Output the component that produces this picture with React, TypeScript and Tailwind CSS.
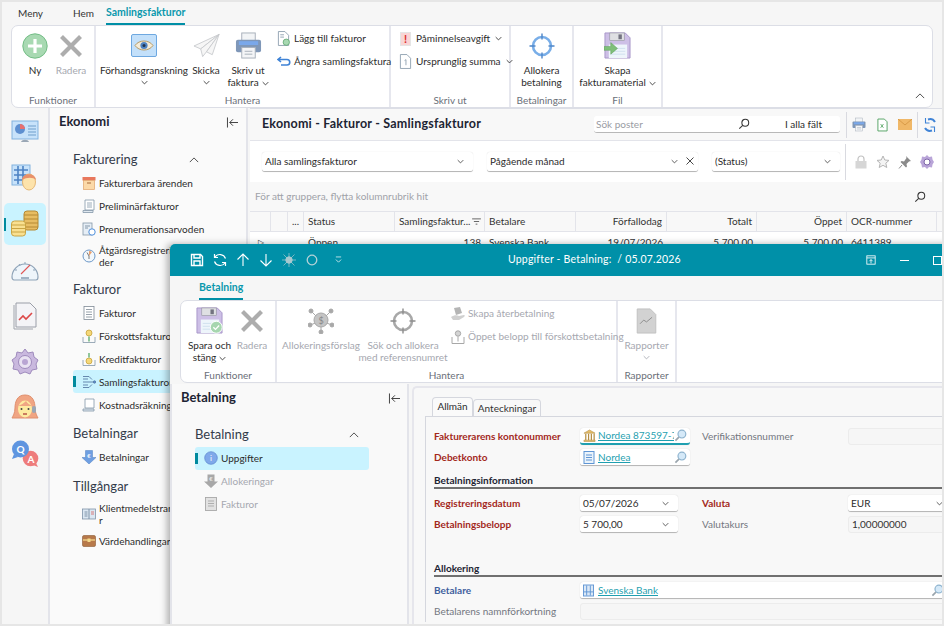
import React from 'react';

type IconProps = { className?: string };

const Chev = ({ className = '' }: IconProps) => (
  <svg viewBox="0 0 10 6" className={`inline-block w-[7px] h-[5px] ${className}`} fill="none" stroke="currentColor" strokeWidth="1.2">
    <path d="M1 1l4 4 4-4" />
  </svg>
);

const ChevUp = ({ className = '' }: IconProps) => (
  <svg viewBox="0 0 12 7" className={`w-[10px] h-[6px] ${className}`} fill="none" stroke="#444" strokeWidth="1.1">
    <path d="M1 6l5-5 5 5" />
  </svg>
);

const Search = ({ color = '#333' }: { color?: string }) => (
  <svg viewBox="0 0 14 14" className="w-[12px] h-[12px] shrink-0" fill="none" stroke={color} strokeWidth="1.2">
    <circle cx="8.5" cy="5.5" r="4" />
    <path d="M5.5 8.5L1.5 12.5" />
  </svg>
);

const BlueLens = () => (
  <svg viewBox="0 0 14 14" className="w-[13px] h-[13px] shrink-0" fill="#d5e9f8" stroke="#8fb4cf" strokeWidth="1.3">
    <circle cx="8.5" cy="5.5" r="4.2" />
    <path d="M5.3 8.7L1.5 12.5" stroke="#9aa5ad" strokeWidth="1.8" />
  </svg>
);

const Collapse = () => (
  <svg viewBox="0 0 14 12" className="w-[13px] h-[11px]" fill="none" stroke="#333" strokeWidth="1">
    <path d="M1.5 0.5v11M13 6H4M7.5 2.5L4 6l3.5 3.5" />
  </svg>
);

const PlusCircle = () => (
  <svg viewBox="0 0 26 26" className="w-[26px] h-[26px]">
    <circle cx="13" cy="13" r="12.2" fill="#a8d9b2" stroke="#74bd86" />
    <path d="M13 6v14M6 13h14" stroke="#fff" strokeWidth="3.2" />
  </svg>
);

const BigX = () => (
  <svg viewBox="0 0 24 24" className="w-[24px] h-[24px]">
    <path d="M2.5 2.5l19 19M21.5 2.5l-19 19" stroke="#adadad" strokeWidth="4.2" />
  </svg>
);

const EyeBox = () => (
  <svg viewBox="0 0 26 24" className="w-[26px] h-[24px]">
    <rect x="0.5" y="0.5" width="25" height="22" rx="1.5" fill="#c3e0fa" stroke="#6ea8e0" />
    <path d="M4 11.5c4-6 14-6 18 0-4 6-14 6-18 0z" fill="#f5ecd8" stroke="#b59a66" />
    <circle cx="13" cy="11.5" r="3.6" fill="#4e83c2" />
    <circle cx="13" cy="11.5" r="1.5" fill="#20344f" />
  </svg>
);

const Plane = () => (
  <svg viewBox="0 0 28 26" className="w-[27px] h-[26px]" fill="#f6f6f6" stroke="#c6c9cc" strokeWidth="0.9">
    <path d="M27 1L1 13l7 3z" />
    <path d="M27 1L8 16l2 8 4-5z" />
    <path d="M27 1L14 19l6 3z" />
  </svg>
);

const Printer = ({ size = 'w-[27px] h-[27px]' }: { size?: string }) => (
  <svg viewBox="0 0 28 28" className={size}>
    <rect x="7" y="1" width="14" height="9" fill="#f2f4f6" stroke="#a8b0ba" />
    <rect x="1" y="8" width="26" height="13" rx="2" fill="#7f97b8" />
    <rect x="4" y="9.5" width="20" height="4" fill="#7aa8ea" />
    <rect x="7" y="16" width="14" height="11" fill="#f4f5f7" stroke="#a8b0ba" />
    <path d="M10 20h8M10 23h8" stroke="#a8b0ba" />
  </svg>
);

const Target = ({ gray = false }: { gray?: boolean }) => {
  const c = gray ? '#a8a8a8' : '#79aee8';
  const d = gray ? '#8d8d8d' : '#4f86c8';
  return (
    <svg viewBox="0 0 26 26" className="w-[26px] h-[26px]" fill="none">
      <circle cx="13" cy="13" r="9" stroke={c} strokeWidth="2.6" />
      <path d="M13 0.5v6M13 19.5v6M0.5 13h6M19.5 13h6" stroke={d} strokeWidth="1.4" />
    </svg>
  );
};

const Floppy = ({ badge }: { badge: 'arrow' | 'check' }) => (
  <svg viewBox="0 0 28 28" className="w-[27px] h-[27px]">
    <path d="M1 1h21l5 5v21H1z" fill="#cdbfe6" stroke="#a796c8" />
    <rect x="6" y="1" width="15" height="8" fill="#dfe0e3" stroke="#8e8e9a" strokeWidth="0.6" />
    <rect x="15" y="2.5" width="3.5" height="5" fill="#737380" />
    <rect x="5" y="13" width="19" height="14" fill="#eef5fb" />
    <path d="M7 17h15M7 20h15M7 23h15" stroke="#cfe0ee" />
    {badge === 'arrow' ? (
      <path d="M0 15h7v-4l7 6-7 6v-4H0z" fill="#7fbf7a" stroke="#5c9c58" strokeWidth="0.5" />
    ) : (
      <g>
        <circle cx="21" cy="21" r="6.2" fill="#a6d6af" stroke="#fff" />
        <path d="M18 21l2.2 2.2 3.8-4" stroke="#fff" strokeWidth="1.4" fill="none" />
      </g>
    )}
  </svg>
);

const SmallDoc = ({ children }: { children?: React.ReactNode }) => (
  <svg viewBox="0 0 14 16" className="w-[13px] h-[15px] shrink-0" fill="#fff" stroke="#8497a8" strokeWidth="0.9">
    <path d="M1.5 0.5h7l4 4v11h-11z" />
    {children}
  </svg>
);

const RailIcon = ({ name }: { name: string }) => {
  const cls = 'w-[28px] h-[28px]';
  if (name === 'board')
    return (
      <svg viewBox="0 0 28 28" className={cls}>
        <rect x="1" y="3" width="26" height="18" fill="#c7e2fa" stroke="#82b2de" />
        <circle cx="9" cy="11" r="5" fill="#5d8fd0" />
        <path d="M9 11V6a5 5 0 0 1 5 5z" fill="#e76f6f" />
        <path d="M17 8h8M17 11h8M17 14h8M17 17h8" stroke="#6f9ecb" />
        <path d="M10 24c1-3 7-3 8 0z" fill="#9aa7b5" />
      </svg>
    );
  if (name === 'person')
    return (
      <svg viewBox="0 0 28 28" className={cls}>
        <rect x="1" y="1" width="18" height="20" fill="#c7e2fa" stroke="#82b2de" />
        <path d="M3 6h14M3 11h14M3 16h14M7 2v18M12 2v18" stroke="#4d83c4" strokeWidth="1.6" />
        <ellipse cx="18" cy="18" rx="6.5" ry="8" fill="#fde3ab" stroke="#e6b877" />
        <path d="M11 16c0-7 13-8 14 0-3-3-9-3-14 0z" fill="#e8906a" />
      </svg>
    );
  if (name === 'coins')
    return (
      <svg viewBox="0 0 28 28" className={cls}>
        <rect x="13" y="1" width="14" height="19" rx="3" fill="#e7bd63" stroke="#b58935" />
        <path d="M13 5h14M13 9h14M13 13h14M13 17h14" stroke="#b58935" />
        <rect x="0.5" y="11" width="14" height="15" rx="3" fill="#f9e090" stroke="#c9a443" />
        <path d="M1 15h13M1 18.5h13M1 22h13" stroke="#c9a443" />
      </svg>
    );
  if (name === 'gauge')
    return (
      <svg viewBox="0 0 28 28" className={cls}>
        <path d="M1 21a13 13 0 1 1 26 0c0 2-1 3-2 3H3c-1 0-2-1-2-3z" fill="#eef5fb" stroke="#8ea3b8" strokeWidth="1.2" />
        <path d="M10 18l9-9" stroke="#e05656" strokeWidth="1.1" />
        <path d="M10 22h8" stroke="#8ea3b8" strokeWidth="1.6" />
        <path d="M4 14h2M8 8l1 1.5M14 6v2M22 14h2" stroke="#8ea3b8" />
      </svg>
    );
  if (name === 'report')
    return (
      <svg viewBox="0 0 28 28" className={cls}>
        <path d="M3 3v24h19" fill="none" stroke="#a0a4ad" />
        <path d="M5 1h14l6 6v18H5z" fill="#f4f4f7" stroke="#9a9ea8" />
        <path d="M8 18l4-4 3 3 6-6" fill="none" stroke="#dc4848" strokeWidth="1.6" />
      </svg>
    );
  if (name === 'gear')
    return (
      <svg viewBox="0 0 28 28" className={cls}>
        <path d="M14 1l3 4 5-1 1 5 4 3-2 4 1 5-5 1-2 4-5-2-5 2-2-4-5-1 1-5-2-4 4-3 1-5 5 1z" fill="#c9b8de" stroke="#9f8bbd" />
        <circle cx="14" cy="14" r="6.5" fill="#e9e2f2" stroke="#9f8bbd" />
        <circle cx="14" cy="14" r="3" fill="#b9a5d3" />
      </svg>
    );
  if (name === 'agent')
    return (
      <svg viewBox="0 0 28 28" className={cls}>
        <path d="M14 1C6 1 4 8 4 14c0 5-2 8-3 10h26c-1-2-3-5-3-10 0-6-2-13-10-13z" fill="#f0a583" stroke="#e08f6d" />
        <ellipse cx="14" cy="15" rx="7" ry="8.5" fill="#fdeaa0" />
        <path d="M7 12c3-1 6-3 8-5 1 2 4 4 6 5" fill="#f0a583" />
        <circle cx="10.5" cy="15" r="1" fill="#444" />
        <circle cx="17.5" cy="15" r="1" fill="#444" />
        <path d="M12 20h4" stroke="#a33" strokeWidth="1.2" />
        <rect x="21" y="12" width="4" height="7" rx="2" fill="#9aa7b5" />
      </svg>
    );
  return (
    <svg viewBox="0 0 28 28" className={cls}>
      <circle cx="19.5" cy="18.5" r="7.8" fill="#ee7c7c" />
      <path d="M22 25l5 2-2.500-5z" fill="#ee7c7c" />
      <circle cx="9.500" cy="9" r="8.500" fill="#5f95e0" />
      <path d="M3 14l-2 5 6-2z" fill="#5f95e0" />
      <text x="9.500" y="12.500" fontSize="10" fontWeight="700" fill="#fff" textAnchor="middle" fontFamily="Lato">Q</text>
      <text x="20" y="23" fontSize="10" fontWeight="700" fill="#fff" textAnchor="middle" fontFamily="Lato">A</text>
    </svg>
  );
};

const NavIcon = ({ name }: { name: string }) => {
  const cls = 'w-[14px] h-[14px] shrink-0';
  if (name === 'box')
    return (
      <svg viewBox="0 0 14 14" className={cls}>
        <rect x="0.5" y="1" width="13" height="3.5" fill="#e8775c" />
        <rect x="1.5" y="4.5" width="11" height="9" fill="#fbd9a8" stroke="#e0a36a" strokeWidth="0.7" />
        <path d="M5 7h4" stroke="#a56a3a" />
      </svg>
    );
  if (name === 'prelim')
    return (
      <svg viewBox="0 0 14 14" className={cls} fill="#fff" stroke="#8497a8" strokeWidth="0.8">
        <path d="M3 1h9v10H3z" />
        <path d="M1 11.5h10v2H1z" fill="#dfe8f0" />
        <path d="M5 4h5M5 6h5M5 8h5" />
      </svg>
    );
  if (name === 'sub')
    return (
      <svg viewBox="0 0 14 14" className={cls}>
        <rect x="1" y="1" width="9" height="12" fill="#e6eef6" stroke="#8497a8" strokeWidth="0.8" />
        <path d="M3 4h5M3 6h3" stroke="#8497a8" />
        <circle cx="10" cy="10" r="3.2" fill="#fff" stroke="#4f8fdc" />
      </svg>
    );
  if (name === 'clock')
    return (
      <svg viewBox="0 0 14 14" className={cls} fill="#f3f8fc">
        <circle cx="7" cy="7" r="6" stroke="#6d98c8" />
        <path d="M7 2a5 5 0 0 1 3 1L7 7z" fill="#e9a06e" />
        <path d="M5 3.5L7 7l0 3" stroke="#555" fill="none" strokeWidth="0.8" />
      </svg>
    );
  if (name === 'list')
    return (
      <svg viewBox="0 0 14 14" className={cls} fill="#fff" stroke="#7f8a96" strokeWidth="0.8">
        <rect x="2" y="0.5" width="10" height="13" />
        <path d="M4 3.5h6M4 6h6M4 8.5h6M4 11h6" />
      </svg>
    );
  if (name === 'advance' || name === 'credit')
    return (
      <svg viewBox="0 0 14 14" className={cls}>
        <path d="M1 8v5.5h12V8" fill="none" stroke="#8497a8" strokeWidth="0.8" />
        <circle cx="7" cy={name === 'advance' ? 4 : 9} r="3" fill="#f5d878" stroke="#c09a30" strokeWidth="0.7" />
        <path d={name === 'advance' ? 'M7 7.5v5' : 'M7 5.5V1'} stroke="#4aa35a" strokeWidth="1.2" />
      </svg>
    );
  if (name === 'collect')
    return (
      <svg viewBox="0 0 14 14" className={cls} fill="none" stroke="#5a7da6" strokeWidth="0.9">
        <path d="M1 1.5h6l3 3v0M1 7h12M1 12.5h6l3-3" />
        <path d="M1 4h5M1 10h5" />
        <circle cx="12.5" cy="7" r="1.2" fill="#5a8fd0" />
      </svg>
    );
  if (name === 'laptop')
    return (
      <svg viewBox="0 0 14 14" className={cls} fill="#fff" stroke="#8497a8" strokeWidth="0.8">
        <path d="M3 1h9v9H3z" />
        <path d="M1 11h11v2H1z" fill="#dfe8f0" />
      </svg>
    );
  if (name === 'pay')
    return (
      <svg viewBox="0 0 14 14" className={cls}>
        <path d="M3.5 0.5h7v7H14L7 14 0 7.5h3.5z" fill="#6f9fe2" stroke="#4f7fc0" strokeWidth="0.5" />
        <text x="7" y="7.5" fontSize="6" fill="#fff" textAnchor="middle" fontFamily="Lato">€</text>
      </svg>
    );
  if (name === 'book')
    return (
      <svg viewBox="0 0 14 14" className={cls}>
        <rect x="0.5" y="2" width="13" height="10" fill="#dbe7f2" stroke="#7f93a8" strokeWidth="0.8" />
        <path d="M7 2v10" stroke="#7f93a8" />
        <path d="M2.5 5h3M2.5 7h3M2.5 9h3" stroke="#7f93a8" />
        <path d="M9 5h3M9 7h3" stroke="#d87a7a" />
      </svg>
    );
  if (name === 'chest')
    return (
      <svg viewBox="0 0 14 14" className={cls}>
        <rect x="0.5" y="1.5" width="13" height="11" rx="1.5" fill="#b7794a" stroke="#8b5a34" strokeWidth="0.6" />
        <path d="M1 6h12" stroke="#f4d98c" strokeWidth="1.3" />
        <rect x="5.5" y="4.5" width="3" height="3.5" fill="#f4d98c" />
      </svg>
    );
  if (name === 'info')
    return (
      <svg viewBox="0 0 14 14" className={cls}>
        <circle cx="7" cy="7" r="6.3" fill="#7fa9ea" stroke="#5d88cf" strokeWidth="0.7" />
        <text x="7" y="10" fontSize="8" fill="#fff" textAnchor="middle" fontFamily="Lato">i</text>
      </svg>
    );
  if (name === 'alloc')
    return (
      <svg viewBox="0 0 14 14" className={cls}>
        <path d="M3.5 0.5h7v7H14L7 14 0 7.5h3.5z" fill="#a8a8a8" />
        <text x="7" y="7" fontSize="6" fill="#eee" textAnchor="middle" fontFamily="Lato">€</text>
      </svg>
    );
  return (
    <svg viewBox="0 0 14 14" className={cls} fill="#e2e2e2" stroke="#a8a8a8" strokeWidth="0.9">
      <rect x="1.5" y="0.5" width="11" height="13" />
      <path d="M4 4h6M4 6.5h6M4 9h6" />
    </svg>
  );
};

const BigButton = ({ icon, lines, chev, off, className = '' }: { icon: React.ReactNode; lines: string[]; chev?: 'inline' | 'below'; off?: boolean; className?: string }) => (
  <div className={`flex flex-col items-center shrink-0 ${className}`}>
    <div className="h-[37px] flex items-center justify-center">{icon}</div>
    <div className={`text-center leading-[12px] whitespace-nowrap ${off ? 'text-[#a6a8b0]' : 'text-[#2c2c2c]'}`}>
      {lines.map((l, i) => (
        <div key={l}>
          {l}
          {chev === 'inline' && i === lines.length - 1 && <Chev className="ml-[3px] align-middle" />}
        </div>
      ))}
      {chev === 'below' && <div className="h-[12px] flex items-center justify-center"><Chev /></div>}
    </div>
  </div>
);

const SmallButton = ({ icon, text, chev, off }: { icon: React.ReactNode; text: string; chev?: boolean; off?: boolean }) => (
  <div className={`h-[23px] flex items-center gap-[3px] whitespace-nowrap ${off ? 'text-[#a6a8b0]' : 'text-[#2c2c2c]'}`}>
    <span className="w-[15px] flex justify-center shrink-0">{icon}</span>
    {text}
    {chev && <Chev className="ml-[2px]" />}
  </div>
);

const Group = ({ label, className = '', children }: { label: string; className?: string; children: React.ReactNode }) => (
  <div className={`h-full flex flex-col border-r-2 border-[#e6e7ee] shrink-0 ${className}`}>
    <div className="flex-1 min-h-0 flex pt-[1px]">{children}</div>
    <div className="h-[14px] text-center text-[#6a6f78] leading-[14px]">{label}</div>
  </div>
);

const NavSection = ({ title, first, open }: { title: string; first?: boolean; open?: boolean }) => (
  <div className={`h-[20px] mb-[1.5px] flex items-center justify-between pr-[42px] text-[13px] text-[#333b4a] ${first ? '' : 'mt-[8px]'}`}>
    {title}
    {open && <ChevUp />}
  </div>
);

const NavItem = ({ icon, text, active, off, tall }: { icon: string; text: React.ReactNode; active?: boolean; off?: boolean; tall?: boolean }) => (
  <div className={`relative flex items-center ${tall ? 'h-[31px]' : 'h-[23px]'} ${active ? 'bg-[#c9f3ff] rounded-[3px]' : ''} ${off ? 'text-[#a6a8b0]' : 'text-[#2c2c2c]'}`}>
    {active && <span className="absolute left-0 top-[6px] h-[11px] w-[3px] bg-[#008a9e]" />}
    <span className="w-[26px] flex justify-end pr-[3px] shrink-0"><NavIcon name={icon} /></span>
    <span className="leading-[12px] whitespace-nowrap">{text}</span>
  </div>
);

const Combo = ({ text, className = '', clear }: { text: string; className?: string; clear?: boolean }) => (
  <div className={`h-[20px] bg-white rounded-[3px] border-b border-b-[#b8b8b8] shadow-[0_0_1px_rgba(0,0,0,0.18)] flex items-center px-[3px] text-[#2c2c2c] shrink-0 ${className}`}>
    <span className="flex-1 truncate">{text}</span>
    <Chev className="mr-[6px] text-[#444]" />
    {clear && (
      <svg viewBox="0 0 8 8" className="w-[8px] h-[8px] ml-[2px] mr-[1px]" stroke="#333" strokeWidth="0.9">
        <path d="M0.500 0.500l7 7M7.500 0.500l-7 7" />
      </svg>
    )}
  </div>
);

const FormField = ({ className = '', children }: { className?: string; children?: React.ReactNode }) => (
  <div className={`h-[17px] bg-white rounded-[3px] border-b border-b-[#b8b8b8] shadow-[0_0_1px_rgba(0,0,0,0.2)] flex items-center px-[3px] shrink-0 ${className}`}>
    {children}
  </div>
);

const ReadField = ({ className = '', children }: { className?: string; children?: React.ReactNode }) => (
  <div className={`h-[17px] bg-[#f6f6f6] rounded-[3px] border border-[#ececec] flex items-center px-[3px] shrink-0 text-[#333] ${className}`}>
    {children}
  </div>
);

const Label = ({ tone, children }: { tone: 'red' | 'blue' | 'gray'; children: React.ReactNode }) => {
  const colors = { red: 'text-[#a3281c] font-bold', blue: 'text-[#3f5f9e] font-bold', gray: 'text-[#737780]' };
  return <span className={`w-[146px] shrink-0 whitespace-nowrap ${colors[tone]}`}>{children}</span>;
};

const Heading = ({ text, className = '' }: { text: string; className?: string }) => (
  <div className={`border-b-2 border-[#707070] h-[15px] font-bold text-[#1d2433] leading-[12px] whitespace-nowrap ${className}`}>{text}</div>
);

const columns = [
  { label: '', cls: 'w-[21px]' },
  { label: '', cls: 'w-[17px]' },
  { label: '...', cls: 'w-[16px]' },
  { label: 'Status', cls: 'w-[91px]' },
  { label: 'Samlingsfaktur...', cls: 'w-[90px]', filter: true },
  { label: 'Betalare', cls: 'w-[91px]' },
  { label: 'Förfallodag', cls: 'w-[91px] justify-end' },
  { label: 'Totalt', cls: 'w-[90px] justify-end' },
  { label: 'Öppet', cls: 'w-[90px] justify-end' },
  { label: 'OCR-nummer', cls: 'w-[90px]' },
];

const row = [
  { v: '▷', cls: 'w-[21px] justify-center text-[8px]' },
  { v: '', cls: 'w-[17px]' },
  { v: '', cls: 'w-[16px]' },
  { v: 'Öppen', cls: 'w-[91px]' },
  { v: '138', cls: 'w-[90px] justify-end' },
  { v: 'Svenska Bank', cls: 'w-[91px]' },
  { v: '19/07/2026', cls: 'w-[91px] justify-end' },
  { v: '5 700,00', cls: 'w-[90px] justify-end' },
  { v: '5 700,00', cls: 'w-[90px] justify-end' },
  { v: '6411389', cls: 'w-[90px]' },
];

export default function App() {
  return (
    <div className="relative w-[944px] h-[626px] overflow-hidden border-2 border-[#e6e6e6] bg-[#f6f6f6] font-['Lato',sans-serif] text-[10px] text-[#2c2c2c]">
      {/* huvudfönster */}
      <div className="h-[23px] flex items-end pl-[16px] text-[#333]">
        <span className="w-[55px] h-[19px]">Meny</span>
        <span className="w-[33px] h-[19px]">Hem</span>
        <span className="h-[20px] border-b-2 border-[#008fa6] font-bold text-[#0b98ad] text-[10.5px] leading-[15px]">Samlingsfakturor</span>
      </div>

      <div className="ml-[9px] w-[922px] h-[83px] bg-white rounded-[7px] border border-[#dcdee6] flex relative">
        <Group label="Funktioner" className="w-[84px]">
          <div className="flex pl-[5px]">
            <BigButton className="w-[36px]" icon={<PlusCircle />} lines={['Ny']} />
            <BigButton className="w-[36px]" icon={<BigX />} lines={['Radera']} off />
          </div>
        </Group>
        <Group label="Hantera" className="w-[295px]">
          <div className="flex pl-[4px]">
            <BigButton className="w-[88px]" icon={<EyeBox />} lines={['Förhandsgranskning']} chev="below" />
            <BigButton className="w-[36px]" icon={<Plane />} lines={['Skicka']} chev="below" />
            <BigButton className="w-[48px]" icon={<Printer />} lines={['Skriv ut', 'faktura']} chev="inline" />
            <div className="pl-[4px]">
              <SmallButton
                icon={
                  <SmallDoc>
                    <circle cx="10" cy="12" r="3.4" fill="#a8d9b2" stroke="#63a874" />
                    <path d="M3.5 4h4M3.5 6.5h4" />
                  </SmallDoc>
                }
                text="Lägg till fakturor"
              />
              <SmallButton
                icon={
                  <svg viewBox="0 0 14 12" className="w-[14px] h-[12px]" fill="none" stroke="#3f83d6" strokeWidth="1.6">
                    <path d="M4 1L1 3.5 4 6M1 3.5h9a2.7 2.7 0 0 1 0 5.5H4" />
                  </svg>
                }
                text="Ångra samlingsfaktura"
              />
            </div>
          </div>
        </Group>
        <Group label="Skriv ut" className="w-[120px]">
          <div className="pl-[7px]">
            <SmallButton
              icon={
                <span className="w-[11px] h-[14px] bg-[#f9d5d5] border border-[#e5e5e5] text-[#d92a2a] font-bold text-[11px] leading-[12px] text-center">!</span>
              }
              text="Påminnelseavgift"
              chev
            />
            <SmallButton
              icon={
                <SmallDoc>
                  <path d="M6 7l1.5-1v6" strokeWidth="0.9" />
                </SmallDoc>
              }
              text="Ursprunglig summa"
              chev
            />
          </div>
        </Group>
        <Group label="Betalningar" className="w-[63px]">
          <BigButton className="w-full" icon={<Target />} lines={['Allokera', 'betalning']} />
        </Group>
        <Group label="Fil" className="w-[89px]">
          <BigButton className="w-full" icon={<Floppy badge="arrow" />} lines={['Skapa', 'fakturamaterial']} chev="inline" />
        </Group>
        <div className="flex-1 flex items-end justify-end pr-[7px] pb-[8px]">
          <ChevUp />
        </div>
      </div>

      <div className="flex h-[516px]">
        <div className="w-[48px] shrink-0 border-r-2 border-[#e3e4ea] flex flex-col pt-[1px] items-center">
          {['board', 'person', 'coins', 'gauge', 'report', 'gear', 'agent', 'qa'].map(n => (
            <div key={n} className={`relative w-[42px] h-[42px] my-[2px] flex items-center justify-center rounded-[5px] ${n === 'coins' ? 'bg-[#c9f3ff]' : ''}`}>
              {n === 'coins' && <span className="absolute left-0 top-[15px] w-[2px] h-[13px] bg-[#008a9e]" />}
              <RailIcon name={n} />
            </div>
          ))}
        </div>

        <div className="w-[198px] shrink-0 border-r-2 border-[#e3e4ea] bg-[#fafafa] pl-[9px] pr-[5px]">
          <div className="h-[28px] flex items-center justify-between pr-[2px]">
            <span className="font-bold text-[13px] text-[#1d2433]">Ekonomi</span>
            <Collapse />
          </div>
          <div className="pl-[14px] pt-[14px]">
            <NavSection title="Fakturering" first open />
            <NavItem icon="box" text="Fakturerbara ärenden" />
            <NavItem icon="prelim" text="Preliminärfakturor" />
            <NavItem icon="sub" text="Prenumerationsarvoden" />
            <NavItem icon="clock" tall text={<>Åtgärdsregistrering<br />der</>} />
            <NavSection title="Fakturor" />
            <NavItem icon="list" text="Fakturor" />
            <NavItem icon="advance" text="Förskottsfakturor" />
            <NavItem icon="credit" text="Kreditfakturor" />
            <NavItem icon="collect" text="Samlingsfakturor" active />
            <NavItem icon="laptop" text="Kostnadsräkningar" />
            <NavSection title="Betalningar" />
            <NavItem icon="pay" text="Betalningar" />
            <NavSection title="Tillgångar" />
            <NavItem icon="book" tall text={<>Klientmedelstransaktione<br />r</>} />
            <NavItem icon="chest" text="Värdehandlingar" />
          </div>
        </div>

        <div className="flex-1 ml-[2px] min-w-0 bg-white border-t border-[#dcdee6]">
          <div className="h-[32px] flex items-center bg-[#f8f8f8] border-b border-[#e3e4ea] pl-[12px]">
            <span className="w-[332px] font-bold text-[12.5px] tracking-[0.2px] text-[#1d2433] whitespace-nowrap">Ekonomi - Fakturor - Samlingsfakturor</span>
            <div className="w-[246px] h-[17px] bg-white rounded-[3px] border-b border-b-[#b8b8b8] flex items-center pl-[2px] shrink-0">
              <span className="w-[142px] text-[#9a9ca3]">Sök poster</span>
              <Search />
              <span className="ml-[35px]">I alla fält</span>
            </div>
            <div className="ml-[6px] h-[26px] border-l border-[#d9dae0] w-[71px] flex items-center">
              <span className="w-[24px] flex justify-center"><Printer size="w-[14px] h-[15px]" /></span>
              <span className="w-[23px] flex justify-center">
                <svg viewBox="0 0 12 14" className="w-[11px] h-[14px]" fill="#fff" stroke="#4fa05e">
                  <path d="M1 0.5h7l3 3v10H1z" />
                  <path d="M4 6l3 4M7 6l-3 4" strokeWidth="0.9" />
                </svg>
              </span>
              <span className="w-[22px] flex justify-center">
                <svg viewBox="0 0 14 11" className="w-[14px] h-[11px]">
                  <rect width="14" height="11" fill="#f0b868" />
                  <path d="M0 0l7 6 7-6" fill="none" stroke="#d89a48" />
                </svg>
              </span>
            </div>
            <div className="h-[26px] border-l border-[#d9dae0] w-[24px] flex items-center justify-center">
              <svg viewBox="0 0 14 14" className="w-[14px] h-[14px]" fill="none" stroke="#3f83d6" strokeWidth="2">
                <path d="M12 4a6 6 0 0 0-7-2.5M2 10a6 6 0 0 0 7 2.5" />
                <path d="M2.5 0v5h4M11.5 14V9h-4" strokeWidth="1.1" />
              </svg>
            </div>
          </div>

          <div className="h-[41px] flex items-center pl-[12px] gap-[14px]">
            <Combo text="Alla samlingsfakturor" className="w-[211px]" />
            <Combo text="Pågående månad" className="w-[211px]" clear />
            <Combo text="(Status)" className="w-[128px]" />
            <div className="ml-[-9px] h-[36px] border-l border-[#d9dae0] flex items-center gap-[8px] pl-[8px]">
              <svg viewBox="0 0 14 14" className="w-[14px] h-[14px]">
                <path d="M4 6V4a3 3 0 0 1 6 0v2" fill="none" stroke="#c2c2c2" strokeWidth="1.2" />
                <rect x="1.5" y="6" width="11" height="7.5" fill="#d6d6d6" />
              </svg>
              <svg viewBox="0 0 14 14" className="w-[14px] h-[14px]" fill="#f4f4f4" stroke="#b5b5b5">
                <path d="M7 1l1.8 4 4.2.4-3.2 2.8 1 4.3L7 10.3l-3.8 2.2 1-4.3L1 5.4 5.2 5z" />
              </svg>
              <svg viewBox="0 0 14 14" className="w-[14px] h-[14px]" fill="#8a8a8a">
                <path d="M8 1l5 5-2 .5-2.5 2.5.5 2.5-1 1-5.5-5.5 1-1 2.500.5L8.500 3z" />
                <path d="M4 10l-3 3.500" stroke="#8a8a8a" />
              </svg>
              <svg viewBox="0 0 14 14" className="w-[14px] h-[14px]">
                <path d="M7 0l2 2 3-.5.5 3L14 7l-1.500 2.500-.5 3-3-.500-2 2-2-2-3 .5-.5-3L0 7l1.500-2.500.5-3 3 .500z" fill="#b9a5d8" />
                <circle cx="7" cy="7" r="3" fill="#fff" stroke="#7e66a8" />
              </svg>
            </div>
          </div>

          <div className="h-[29px] bg-[#f8f8f8] flex items-center justify-between pl-[5px] pr-[16px] text-[#a0a2a8]">
            För att gruppera, flytta kolumnrubrik hit
            <Search />
          </div>

          <div className="h-[21px] flex border-y border-[#e3e4ea] bg-[#f8f8f8] text-[#333]">
            {columns.map((c, i) => (
              <div key={i} className={`${c.cls} shrink-0 border-r border-[#e3e4ea] flex items-center px-[4px] whitespace-nowrap overflow-hidden`}>
                {c.label}
                {c.filter && (
                  <svg viewBox="0 0 10 8" className="w-[9px] h-[7px] ml-[2px] shrink-0" stroke="#555" fill="none">
                    <path d="M0 1h10M2 4h6M4 7h2" />
                  </svg>
                )}
              </div>
            ))}
          </div>
          <div className="h-[20px] flex text-[#333]">
            {row.map((c, i) => (
              <div key={i} className={`${c.cls} shrink-0 flex items-center px-[4px] whitespace-nowrap`}>{c.v}</div>
            ))}
          </div>
        </div>
      </div>

      {/* Betalning, fönster ovanpå */}
      <div className="absolute left-[168px] top-[242px] w-[790px] h-[400px] flex flex-col bg-[#f6f6f6] rounded-t-[5px] shadow-[-3px_0_7px_rgba(0,0,0,0.3)]">
        <div className="h-[32px] shrink-0 bg-[#0090a8] rounded-t-[5px] flex items-center text-white pl-[20px]">
          <div className="flex items-center gap-[9px]">
            <svg viewBox="0 0 14 14" className="w-[14px] h-[14px]" fill="none" stroke="#fff" strokeWidth="1.4">
              <path d="M1.500 1.500h9l2 2v9h-11z" />
              <path d="M4 2v3h6V2M4 12V8h6v4" />
            </svg>
            <svg viewBox="0 0 14 14" className="w-[14px] h-[14px]" fill="none" stroke="#fff" strokeWidth="1.200">
              <path d="M12.500 5.500A6 6 0 0 0 2 4M1.500 8.500A6 6 0 0 0 12 10" />
              <path d="M1.500 1v3.500H5M12.500 13V9.500H9" />
            </svg>
            <svg viewBox="0 0 14 14" className="w-[14px] h-[14px]" fill="none" stroke="#fff" strokeWidth="1.100">
              <path d="M7 13V1M1.500 6.500L7 1l5.500 5.500" />
            </svg>
            <svg viewBox="0 0 14 14" className="w-[14px] h-[14px]" fill="none" stroke="#fff" strokeWidth="1.100">
              <path d="M7 1v12M1.500 7.500L7 13l5.500-5.500" />
            </svg>
            <svg viewBox="0 0 14 14" className="w-[14px] h-[14px]" fill="#a9c9cf" stroke="#a9c9cf">
              <circle cx="7" cy="7" r="3.200" />
              <path d="M1.500 1.500l11 11M12.500 1.500l-11 11M7 0v14M0 7h14" strokeWidth="0.7" />
            </svg>
            <svg viewBox="0 0 14 14" className="w-[14px] h-[14px]" fill="none" stroke="#b5d2d8" strokeWidth="1.300">
              <circle cx="7" cy="7" r="4.800" />
            </svg>
          </div>
          <svg viewBox="0 0 8 9" className="ml-[16px] w-[7px] h-[8px] shrink-0" fill="none" stroke="#fff" strokeWidth="0.8">
            <path d="M1 1h6M1 4l3 3 3-3" />
          </svg>
          <span className="ml-[166px] w-[358px] shrink-0 text-[10.5px] tracking-[0.2px] whitespace-nowrap">Uppgifter - Betalning:&nbsp; / 05.07.2026</span>
          <svg viewBox="0 0 12 12" className="w-[10px] h-[10px] shrink-0" fill="none" stroke="#fff">
            <rect x="1" y="1" width="10" height="10" />
            <path d="M1 3.500h10M6 10V5.500M4 7.500l2-2 2 2" />
          </svg>
          <span className="ml-[24px] w-[9px] h-px bg-white shrink-0" />
          <span className="ml-[24px] w-[9px] h-[9px] border border-white shrink-0" />
        </div>

        <div className="h-[24px] shrink-0 flex items-end pl-[29px]">
          <span className="h-[22px] border-b-2 border-[#008fa6] font-bold text-[#0b98ad] text-[10.5px] leading-[18px]">Betalning</span>
        </div>

        <div className="ml-[10px] h-[83px] shrink-0 bg-white rounded-l-[7px] border border-[#dcdee6] flex">
          <Group label="Funktioner" className="w-[96px]">
            <div className="flex pl-[5px]">
              <BigButton className="w-[47px]" icon={<Floppy badge="check" />} lines={['Spara och', 'stäng']} chev="inline" />
              <BigButton className="w-[38px]" icon={<BigX />} lines={['Radera']} off />
            </div>
          </Group>
          <Group label="Hantera" className="w-[341px]">
            <div className="flex pl-[4px]">
              <BigButton
                className="w-[80px]"
                off
                icon={
                  <svg viewBox="0 0 26 26" className="w-[26px] h-[26px]" stroke="#a8a8a8" fill="#a8a8a8">
                    <path d="M13 13L3 3M13 13L23 3M13 13L2 17M13 13L24 17M13 13v11" strokeWidth="1" />
                    <circle cx="3" cy="3" r="2" />
                    <circle cx="23" cy="3" r="2" />
                    <circle cx="2" cy="17" r="2" />
                    <circle cx="24" cy="17" r="2" />
                    <circle cx="13" cy="24" r="2" />
                    <circle cx="13" cy="12" r="7" fill="#c4c4c4" />
                    <text x="13" y="15.500" fontSize="9" textAnchor="middle" fill="#888" stroke="none" fontFamily="Lato">$</text>
                  </svg>
                }
                lines={['Allokeringsförslag']}
              />
              <BigButton className="w-[84px]" off icon={<Target gray />} lines={['Sök och allokera', 'med referensnumret']} />
              <div className="pl-[5px]">
                <SmallButton
                  off
                  icon={
                    <svg viewBox="0 0 14 14" className="w-[14px] h-[14px]" fill="#b5b5b5">
                      <path d="M3 1l6-1 2 6-6 2z" />
                      <path d="M0 10c3-2 6-2 8-1l5-1c1 0 1 1 0 2l-5 3H2z" fill="#d0d0d0" />
                    </svg>
                  }
                  text="Skapa återbetalning"
                />
                <SmallButton
                  off
                  icon={
                    <svg viewBox="0 0 14 14" className="w-[14px] h-[14px]" fill="none" stroke="#a8a8a8">
                      <path d="M1 7v6.500h12V7" />
                      <circle cx="7" cy="3.500" r="2.700" fill="#d4d4d4" />
                      <path d="M7 6.500v5" />
                    </svg>
                  }
                  text="Öppet belopp till förskottsbetalning"
                />
              </div>
            </div>
          </Group>
          <Group label="Rapporter" className="w-[59px]">
            <BigButton
              className="w-full"
              off
              icon={
                <svg viewBox="0 0 22 28" className="w-[21px] h-[26px]">
                  <path d="M1 1h14l6 6v20H1z" fill="#d2d2d2" stroke="#c0c0c0" />
                  <path d="M4 17l4-4 3 2 6-5" stroke="#8a8a8a" fill="none" />
                </svg>
              }
              lines={['Rapporter']}
              chev="below"
            />
          </Group>
        </div>

        <div className="flex-1 min-h-0 flex mt-[1px]">
          <div className="w-[239px] shrink-0 bg-[#f9f9f9] border-x-2 border-[#e3e4ea] pl-[9px] pr-[6px]">
            <div className="h-[28px] flex items-center justify-between">
              <span className="font-bold text-[13px] text-[#1d2433]">Betalning</span>
              <Collapse />
            </div>
            <div className="pl-[14px] pt-[13px]">
              <NavSection title="Betalning" first open />
              <div className="w-[174px]">
                <NavItem icon="info" text="Uppgifter" active />
                <NavItem icon="alloc" text="Allokeringar" off />
                <NavItem icon="doc" text="Fakturor" off />
              </div>
            </div>
          </div>

          <div className="flex-1 min-w-0 ml-[3px] mt-[2px] bg-[#f8f8f8] border-l-2 border-t-2 border-[#e6e6ec] rounded-tl-[5px] pl-[11px] pt-[9px]">
            <div className="flex items-end pl-[7px] h-[19px]">
              <span className="w-[41px] h-[19px] pb-[2px] bg-[#fafafa] border border-b-0 border-[#d5d7de] rounded-t-[4px] flex items-center justify-center">Allmän</span>
              <span className="w-[68px] h-[17px] border border-b-0 border-[#d5d7de] rounded-t-[4px] flex items-center justify-center text-[#333]">Anteckningar</span>
            </div>
            <div className="border-t border-l border-[#d5d7de] pl-[8px] pt-[9px]">
              <div className="h-[21px] flex items-center">
                <Label tone="red">Fakturerarens kontonummer</Label>
                <FormField className="w-[110px] !border-b-2 !border-b-[#1f9fb0]">
                  <svg viewBox="0 0 14 14" className="w-[13px] h-[13px] shrink-0" fill="#e4bd6a" stroke="#b58d3f" strokeWidth="0.6">
                    <path d="M1 4.500L7 1l6 3.500zM1 12h12v1.500H1z" />
                    <path d="M3 5v7M6 5v7M9 5v7M12 5v7" strokeWidth="1.300" />
                  </svg>
                  <span className="ml-[2px] flex-1 text-[#1f9fb0] underline whitespace-nowrap overflow-hidden">Nordea 873597-7...</span>
                  <BlueLens />
                </FormField>
                <span className="ml-[12px] w-[146px] text-[#737780]">Verifikationsnummer</span>
                <ReadField className="w-[110px]" />
              </div>
              <div className="h-[21px] flex items-center">
                <Label tone="red">Debetkonto</Label>
                <FormField className="w-[110px]">
                  <svg viewBox="0 0 12 13" className="w-[12px] h-[13px] shrink-0" fill="#eaf3fb" stroke="#5f95d4">
                    <rect x="1" y="0.500" width="10" height="12" />
                    <path d="M3 4h6M3 6.500h6M3 9h6" />
                  </svg>
                  <span className="ml-[3px] flex-1 text-[#1f9fb0] underline">Nordea</span>
                  <BlueLens />
                </FormField>
              </div>
              <Heading text="Betalningsinformation" className="mt-[6px]" />
              <div className="h-[21px] mt-[4px] flex items-center">
                <Label tone="red">Registreringsdatum</Label>
                <FormField className="w-[98px] justify-between">
                  05/07/2026
                  <Chev className="mr-[6px] text-[#444]" />
                </FormField>
                <span className="ml-[24px] w-[146px] text-[#a3281c] font-bold">Valuta</span>
                <FormField className="w-[102px] justify-between">
                  EUR
                  <Chev className="mr-[4px] text-[#444]" />
                </FormField>
              </div>
              <div className="h-[21px] flex items-center">
                <Label tone="red">Betalningsbelopp</Label>
                <FormField className="w-[98px] justify-between">
                  5 700,00
                  <Chev className="mr-[6px] text-[#444]" />
                </FormField>
                <span className="ml-[24px] w-[146px] text-[#737780]">Valutakurs</span>
                <ReadField className="w-[102px]">1,00000000</ReadField>
              </div>
              <Heading text="Allokering" className="mt-[27px]" />
              <div className="h-[21px] mt-[3px] flex items-center">
                <Label tone="blue">Betalare</Label>
                <FormField className="w-[370px]">
                  <svg viewBox="0 0 12 13" className="w-[11px] h-[13px] shrink-0" fill="#dbe8f6" stroke="#5f95d4">
                    <rect x="0.500" y="0.500" width="11" height="12" />
                    <path d="M4 1v11M8 1v11M1 8h10" />
                  </svg>
                  <span className="ml-[4px] flex-1 text-[#1f9fb0] underline">Svenska Bank</span>
                  <span className="mr-[3px]"><BlueLens /></span>
                </FormField>
              </div>
              <div className="h-[21px] flex items-center">
                <Label tone="gray">Betalarens namnförkortning</Label>
                <ReadField className="w-[370px]" />
              </div>
            </div>
          </div>
        </div>
      </div>
    </div>
  );
}
